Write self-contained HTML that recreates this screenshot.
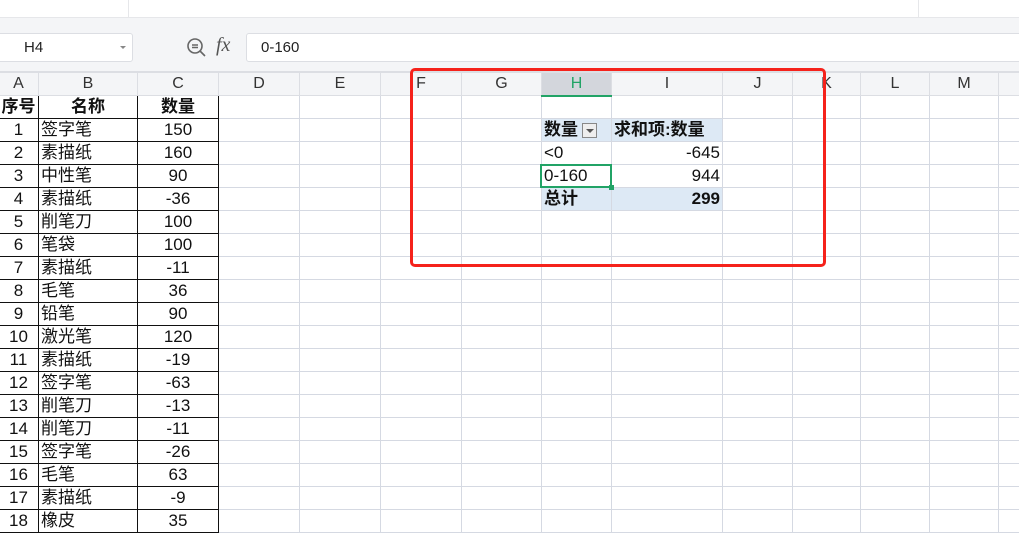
<!DOCTYPE html>
<html><head><meta charset="utf-8"><style>
*{box-sizing:border-box;margin:0;padding:0}
body{width:1019px;height:529px;overflow:hidden;background:#fff;position:relative;font-family:"Liberation Sans","Noto Sans CJK SC",sans-serif;}
.top{position:absolute;left:0;top:0;width:1019px;height:18px;background:#fff;border-bottom:1px solid #e6e7ea}
.band{position:absolute;left:0;top:18px;width:1019px;height:54px;background:#f4f5f7;border-bottom:1px solid #dcdee3}
.name{position:absolute;left:-5px;top:33px;width:138px;height:29px;background:#fff;border:1px solid #dcdee3;border-radius:3px;font-size:15px;line-height:27px;padding-left:28px;color:#222}
.name:after{content:"";position:absolute;right:6px;top:12px;border:3px solid transparent;border-top:3px solid #888}
.fx{position:absolute;left:216px;top:34px;font-family:"Liberation Serif",serif;font-style:italic;font-size:20px;color:#555}
.fin{position:absolute;left:246px;top:33px;width:780px;height:29px;background:#fff;border:1px solid #dcdee3;border-radius:3px;font-size:15px;line-height:27px;padding-left:14px;color:#222}
table{position:absolute;left:-30px;top:72px;width:1088px;border-collapse:collapse;table-layout:fixed}
td{height:23px;border:1px solid #d5d9e2;font-size:17px;color:#111;padding:0 2px;white-space:nowrap;overflow:hidden;line-height:20px}
tr.h td{background:#f4f5f7;text-align:center;color:#333;font-size:16px;border-color:#dcdee3}
.b{border:1px solid #111}
.c{text-align:center}.r{text-align:right}
.bold{font-weight:bold}
.pv{background:#dde9f5}
.red{position:absolute;left:410px;top:68px;width:416px;height:199px;border:3px solid #f5221b;border-radius:5px}
.sel{position:absolute;left:540px;top:164px;width:72px;height:24px;border:2px solid #21a366}
.sel:after{content:"";position:absolute;right:-4px;bottom:-4px;width:5px;height:5px;background:#21a366}
.dd{display:inline-block;width:15px;height:15px;border:1px solid #888;background:#eee;vertical-align:middle;position:relative;margin-left:4px}
.dd:after{content:"";position:absolute;left:3px;top:5px;border:4px solid transparent;border-top:4px solid #555}
</style></head><body>
<div class="top"><div style="position:absolute;left:128px;top:0;width:1px;height:17px;background:#e6e7ea"></div><div style="position:absolute;left:918px;top:0;width:1px;height:17px;background:#e6e7ea"></div></div>
<div class="band"></div>
<div class="name">H4</div>
<svg style="position:absolute;left:186px;top:37px" width="22" height="22" viewBox="0 0 22 22"><circle cx="9" cy="9" r="7" fill="none" stroke="#666" stroke-width="1.6"/><path d="M6 8h6M6 10.5h6M14 14l5 5" stroke="#666" stroke-width="1.6" fill="none"/></svg>
<div class="fx">fx</div>
<div class="fin">0-160</div>
<table>
<colgroup><col style="width:68px"><col style="width:99px"><col style="width:81px"><col style="width:81px"><col style="width:81px"><col style="width:81px"><col style="width:80px"><col style="width:70px"><col style="width:111px"><col style="width:70px"><col style="width:68px"><col style="width:69px"><col style="width:69px"><col style="width:60px"></colgroup>
<tr class="h"><td style="padding-left:30px">A</td><td>B</td><td>C</td><td>D</td><td>E</td><td>F</td><td>G</td><td style="background:#d3d6dc;color:#21a366;border-bottom:2px solid #21a366">H</td><td>I</td><td>J</td><td>K</td><td>L</td><td>M</td><td></td></tr>
<tr><td class="b c bold" style="padding-left:30px">序号</td><td class="b c bold">名称</td><td class="b c bold">数量</td><td></td><td></td><td></td><td></td><td></td><td></td><td></td><td></td><td></td><td></td><td></td></tr>
<tr><td class="b c" style="padding-left:30px">1</td><td class="b">签字笔</td><td class="b c">150</td><td></td><td></td><td></td><td></td><td class="pv bold">数量<span class="dd"></span></td><td class="pv bold">求和项:数量</td><td></td><td></td><td></td><td></td><td></td></tr>
<tr><td class="b c" style="padding-left:30px">2</td><td class="b">素描纸</td><td class="b c">160</td><td></td><td></td><td></td><td></td><td style="border-top-color:#a8c4e0">&lt;0</td><td class="r" style="border-top-color:#a8c4e0">-645</td><td></td><td></td><td></td><td></td><td></td></tr>
<tr><td class="b c" style="padding-left:30px">3</td><td class="b">中性笔</td><td class="b c">90</td><td></td><td></td><td></td><td></td><td>0-160</td><td class="r">944</td><td></td><td></td><td></td><td></td><td></td></tr>
<tr><td class="b c" style="padding-left:30px">4</td><td class="b">素描纸</td><td class="b c">-36</td><td></td><td></td><td></td><td></td><td class="pv bold" style="border-top-color:#a8c4e0">总计</td><td class="pv bold r" style="border-top-color:#a8c4e0">299</td><td></td><td></td><td></td><td></td><td></td></tr>
<tr><td class="b c" style="padding-left:30px">5</td><td class="b">削笔刀</td><td class="b c">100</td><td></td><td></td><td></td><td></td><td></td><td></td><td></td><td></td><td></td><td></td><td></td></tr>
<tr><td class="b c" style="padding-left:30px">6</td><td class="b">笔袋</td><td class="b c">100</td><td></td><td></td><td></td><td></td><td></td><td></td><td></td><td></td><td></td><td></td><td></td></tr>
<tr><td class="b c" style="padding-left:30px">7</td><td class="b">素描纸</td><td class="b c">-11</td><td></td><td></td><td></td><td></td><td></td><td></td><td></td><td></td><td></td><td></td><td></td></tr>
<tr><td class="b c" style="padding-left:30px">8</td><td class="b">毛笔</td><td class="b c">36</td><td></td><td></td><td></td><td></td><td></td><td></td><td></td><td></td><td></td><td></td><td></td></tr>
<tr><td class="b c" style="padding-left:30px">9</td><td class="b">铅笔</td><td class="b c">90</td><td></td><td></td><td></td><td></td><td></td><td></td><td></td><td></td><td></td><td></td><td></td></tr>
<tr><td class="b c" style="padding-left:30px">10</td><td class="b">激光笔</td><td class="b c">120</td><td></td><td></td><td></td><td></td><td></td><td></td><td></td><td></td><td></td><td></td><td></td></tr>
<tr><td class="b c" style="padding-left:30px">11</td><td class="b">素描纸</td><td class="b c">-19</td><td></td><td></td><td></td><td></td><td></td><td></td><td></td><td></td><td></td><td></td><td></td></tr>
<tr><td class="b c" style="padding-left:30px">12</td><td class="b">签字笔</td><td class="b c">-63</td><td></td><td></td><td></td><td></td><td></td><td></td><td></td><td></td><td></td><td></td><td></td></tr>
<tr><td class="b c" style="padding-left:30px">13</td><td class="b">削笔刀</td><td class="b c">-13</td><td></td><td></td><td></td><td></td><td></td><td></td><td></td><td></td><td></td><td></td><td></td></tr>
<tr><td class="b c" style="padding-left:30px">14</td><td class="b">削笔刀</td><td class="b c">-11</td><td></td><td></td><td></td><td></td><td></td><td></td><td></td><td></td><td></td><td></td><td></td></tr>
<tr><td class="b c" style="padding-left:30px">15</td><td class="b">签字笔</td><td class="b c">-26</td><td></td><td></td><td></td><td></td><td></td><td></td><td></td><td></td><td></td><td></td><td></td></tr>
<tr><td class="b c" style="padding-left:30px">16</td><td class="b">毛笔</td><td class="b c">63</td><td></td><td></td><td></td><td></td><td></td><td></td><td></td><td></td><td></td><td></td><td></td></tr>
<tr><td class="b c" style="padding-left:30px">17</td><td class="b">素描纸</td><td class="b c">-9</td><td></td><td></td><td></td><td></td><td></td><td></td><td></td><td></td><td></td><td></td><td></td></tr>
<tr><td class="b c" style="padding-left:30px">18</td><td class="b">橡皮</td><td class="b c">35</td><td></td><td></td><td></td><td></td><td></td><td></td><td></td><td></td><td></td><td></td><td></td></tr>
</table>
<div class="sel"></div>
<div class="red"></div>
</body></html>
